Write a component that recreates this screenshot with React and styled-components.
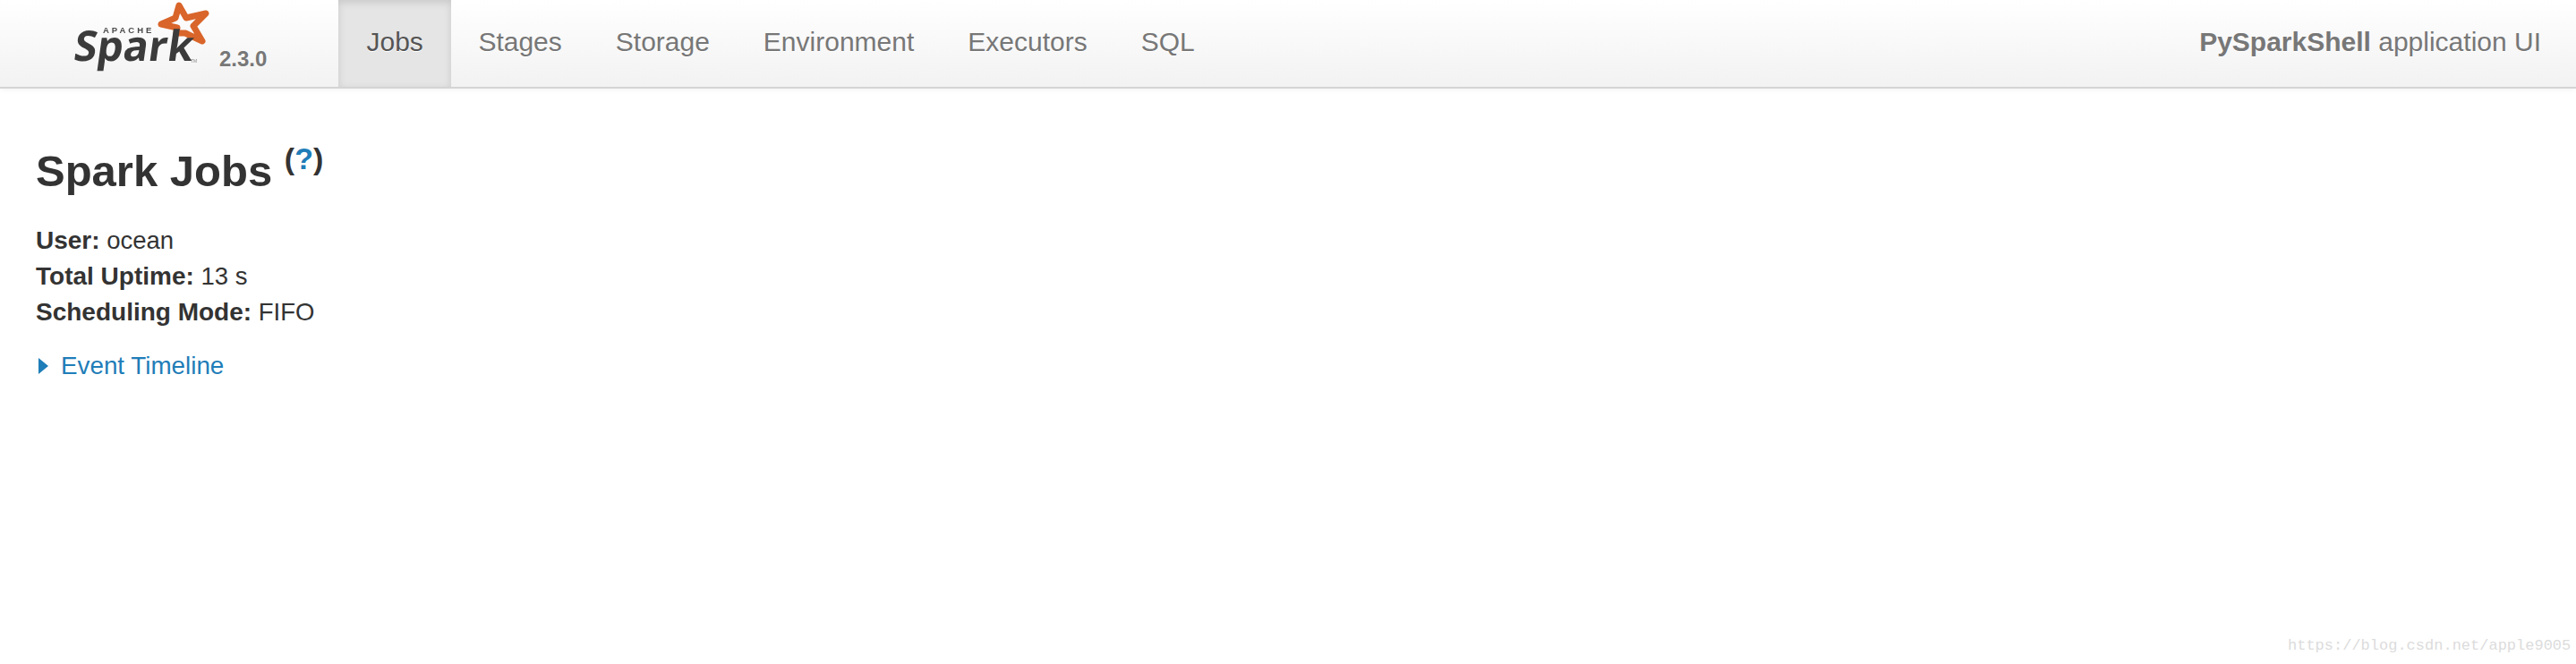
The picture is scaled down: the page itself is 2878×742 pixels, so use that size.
import React from "react";
import styled, { createGlobalStyle } from "styled-components";

const Global = createGlobalStyle`
  html, body { margin: 0; padding: 0; background: #fff; }
  body { font-family: "Liberation Sans", Arial, sans-serif; color: #333; }
`;

const Page = styled.div`
  position: relative;
  min-height: 742px;
  overflow: hidden;
  background: #fff;
`;

const Navbar = styled.nav`
  display: flex;
  align-items: stretch;
  height: 97px;
  background: linear-gradient(to bottom, #ffffff, #f2f2f2);
  border-bottom: 2px solid #d4d4d4;
  box-shadow: 0 1px 6px rgba(0, 0, 0, 0.06);
`;

const Brand = styled.a`
  display: flex;
  width: 378px;
  flex: none;
  padding-left: 70px;
  box-sizing: border-box;
`;

const Logo = styled.svg`
  display: block;
  width: 170px;
  height: 90px;
  flex: none;
`;

const Version = styled.span`
  margin: 50px 0 0 5px;
  font-size: 24px;
  line-height: 32px;
  font-weight: 700;
  color: #777;
`;

const Tabs = styled.ul`
  display: flex;
  margin: 0;
  padding: 0;
  list-style: none;
`;

const Tab = styled.li`
  display: flex;
  align-items: center;
  padding: 0 ${(p) => (p.$active ? "31.5px" : "30px")} 4px;
  font-size: 30px;
  color: ${(p) => (p.$active ? "#555" : "#777")};
  background: ${(p) => (p.$active ? "#e5e5e5" : "transparent")};
  box-shadow: ${(p) => (p.$active ? "inset 0 3px 8px rgba(0, 0, 0, 0.125)" : "none")};
  text-shadow: 0 1px 0 #fff;
`;

const AppName = styled.p`
  margin: 0 39px 4px auto;
  align-self: center;
  font-size: 30px;
  color: #777;
  text-shadow: 0 1px 0 #fff;
`;

const Content = styled.main`
  padding: 0 40px;
`;

const Heading = styled.h3`
  margin: 64px 0 0;
  font-size: 49px;
  line-height: 56px;
  font-weight: 700;
  color: #333;
`;

const Help = styled.sup`
  font-size: 34px;
  line-height: 0;
  position: relative;
  top: -2px;
  margin-left: 0;
  font-weight: 700;
  color: #333;
  a { color: #1f7db8; }
`;

const Details = styled.ul`
  margin: 30px 0 0;
  padding: 0;
  list-style: none;
  font-size: 27.5px;
  line-height: 40px;
  color: #333;
  strong { font-size: 28px; }
`;

const Timeline = styled.div`
  display: flex;
  align-items: center;
  gap: 14px;
  margin: 20px 0 0 3px;
  font-size: 27.8px;
  line-height: 40px;
  color: #1f7db8;
`;

const Arrow = styled.span`
  width: 0;
  height: 0;
  border-left: 11px solid #1f7db8;
  border-top: 9px solid transparent;
  border-bottom: 9px solid transparent;
`;

const Watermark = styled.span`
  position: absolute;
  left: 2556px;
  top: 711px;
  font-family: "Liberation Mono", "DejaVu Sans Mono", monospace;
  font-size: 17px;
  line-height: 22px;
  color: #dcdcdc;
  white-space: nowrap;
`;

const SparkLogo = () => (
  <Logo viewBox="70 0 170 90">
    <defs>
      <filter id="soft" x="-5%" y="-5%" width="110%" height="110%">
        <feGaussianBlur stdDeviation="0.6" />
      </filter>
    </defs>
    <g filter="url(#soft)">
      <path
        d="M200 6 L208 20 L230 15 L216 29 L226 46 L207 37 L197 37 L198 31 L180 27 L196 20 Z"
        fill="none"
        stroke="#d9652a"
        strokeWidth="7"
        strokeLinejoin="round"
      />
      <text x="115" y="37" fontFamily="Liberation Sans" fontWeight="700" fontSize="9.5" letterSpacing="3" fill="#4a4a4a">
        APACHE
      </text>
      <g transform="translate(78 68) skewX(-8)">
        <text
          x="3"
          y="0"
          fontFamily="Open Sans"
          fontSize="47"
          fontWeight="700"
          textLength="133"
          lengthAdjust="spacingAndGlyphs"
          fill="#3a3a3a"
        >
          Spark
        </text>
      </g>
      <text x="213" y="70" fontFamily="Liberation Sans" fontSize="5" fill="#888">
        TM
      </text>
    </g>
  </Logo>
);

const tabs = ["Jobs", "Stages", "Storage", "Environment", "Executors", "SQL"];

export default function App() {
  return (
    <Page>
      <Global />
      <Navbar>
        <Brand>
          <SparkLogo />
          <Version>2.3.0</Version>
        </Brand>
        <Tabs>
          {tabs.map((t, i) => (
            <Tab key={t} $active={i === 0}>
              {t}
            </Tab>
          ))}
        </Tabs>
        <AppName>
          <strong>PySparkShell</strong> application UI
        </AppName>
      </Navbar>
      <Content>
        <Heading>
          Spark Jobs{" "}
          <Help>
            (<a>?</a>)
          </Help>
        </Heading>
        <Details>
          <li>
            <strong>User:</strong> ocean
          </li>
          <li>
            <strong>Total Uptime:</strong> 13 s
          </li>
          <li>
            <strong>Scheduling Mode:</strong> FIFO
          </li>
        </Details>
        <Timeline>
          <Arrow />
          Event Timeline
        </Timeline>
      </Content>
      <Watermark>https://blog.csdn.net/apple9005</Watermark>
    </Page>
  );
}
